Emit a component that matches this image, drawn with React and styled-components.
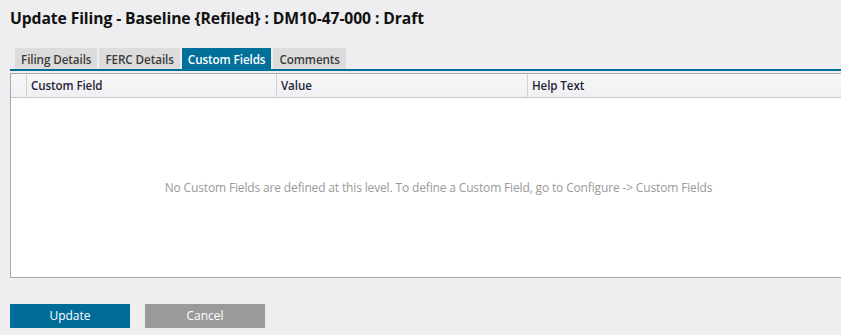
import React, { useState } from "react";
import styled, { createGlobalStyle } from "styled-components";

const GlobalStyle = createGlobalStyle`
  html, body {
    margin: 0;
    padding: 0;
    background: #eeeef0;
    overflow: hidden;
  }
  body {
    font-family: "Open Sans", "Noto Sans", Arial, sans-serif;
  }
`;

const tabs = ["Filing Details", "FERC Details", "Custom Fields", "Comments"];

const App = () => {
  const [active, setActive] = useState("Custom Fields");

  return (
    <Page>
      <GlobalStyle />
      <Title>Update Filing - Baseline {"{Refiled}"} : DM10-47-000 : Draft</Title>

      <TabBar>
        {tabs.map((t) => (
          <Tab key={t} $active={active === t} onClick={() => setActive(t)}>
            {t}
          </Tab>
        ))}
      </TabBar>

      <Grid>
        <HeaderRow>
          <HeaderCell $width="16px" />
          <HeaderCell $width="250px">Custom Field</HeaderCell>
          <HeaderCell $width="251px">Value</HeaderCell>
          <HeaderCell $width="340px" $last>
            Help Text
          </HeaderCell>
        </HeaderRow>
        <EmptyBody>
          No Custom Fields are defined at this level. To define a Custom Field, go to
          Configure -&gt; Custom Fields
        </EmptyBody>
      </Grid>

      <Actions>
        <Button $variant="primary">Update</Button>
        <Button>Cancel</Button>
      </Actions>
    </Page>
  );
};

const Page = styled.div`
  padding: 9px 0 0 10px;
  width: 841px;
  height: 335px;
  box-sizing: border-box;
`;

const Title = styled.h1`
  margin: 0;
  font-size: 15.7px;
  font-weight: 700;
  color: #111;
  line-height: 18px;
  letter-spacing: -0.1px;
`;

const TabBar = styled.div`
  display: flex;
  gap: 2px;
  margin-top: 21px;
  padding-left: 5px;
  border-bottom: 2px solid #00709b;
`;

const Tab = styled.div`
  height: 21px;
  line-height: 22px;
  padding: 0 6px;
  font-size: 11.7px;
  font-weight: 600;
  letter-spacing: -0.1px;
  cursor: pointer;
  background: ${(p) => (p.$active ? "#00709b" : "#dcdcdc")};
  color: ${(p) => (p.$active ? "#fff" : "#3c3c3c")};
`;

const Grid = styled.div`
  margin-top: 2px;
  width: 860px;
  border: 1px solid #a8a8b0;
  border-right: none;
  background: #fff;
`;

const HeaderRow = styled.div`
  display: flex;
  height: 23px;
  border-bottom: 1px solid #c8c8cc;
  background: linear-gradient(#f7f7f8, #f0f0f2);
`;

const HeaderCell = styled.div`
  width: ${(p) => p.$width};
  flex-shrink: 0;
  box-sizing: border-box;
  padding-left: 4px;
  line-height: 23px;
  font-size: 11.6px;
  font-weight: 600;
  letter-spacing: -0.1px;
  color: #1f1f3a;
  border-right: ${(p) => (p.$last ? "none" : "1px solid #d0d0d4")};
`;

const EmptyBody = styled.div`
  height: 179px;
  display: flex;
  align-items: center;
  justify-content: center;
  padding-right: 5px;
  font-size: 12px;
  letter-spacing: -0.15px;
  color: #9a9a9a;
`;

const Actions = styled.div`
  display: flex;
  gap: 15px;
  margin-top: 26px;
`;

const Button = styled.button`
  width: 120px;
  height: 24px;
  border: none;
  padding: 0 0 1px;
  font-family: inherit;
  font-size: 12px;
  color: #fff;
  cursor: pointer;
  background: ${(p) => (p.$variant === "primary" ? "#006c98" : "#9a9a9a")};
`;

export default App;
